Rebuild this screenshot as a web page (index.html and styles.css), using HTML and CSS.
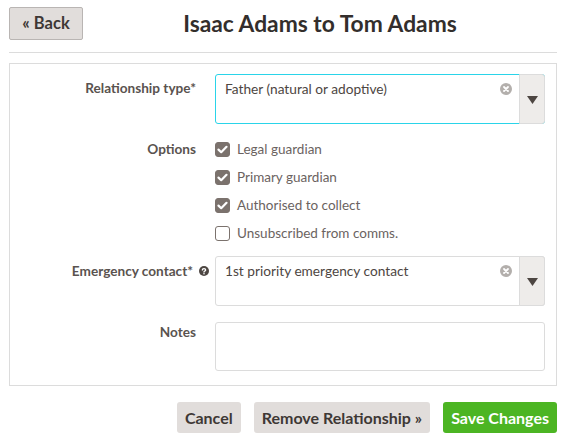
FILE: index.html
```html
<!DOCTYPE html>
<html>
<head>
<meta charset="utf-8">
<link rel="stylesheet" href="styles.css">
</head>
<body>
<div class="page">
  <header class="header">
    <button class="btn btn-back">« Back</button>
    <h1 class="title">Isaac Adams to Tom Adams</h1>
  </header>

  <form class="panel">
    <div class="row row-rel">
      <label class="label label-rel">Relationship type*</label>
      <div class="select select-focus">
        <div class="select-value">Father (natural or adoptive)</div>
        <span class="clear"><svg width="12" height="12" viewBox="0 0 12 12"><circle cx="6" cy="6" r="6" fill="#b3afac"/><path d="M4 4 L8 8 M8 4 L4 8" stroke="#fff" stroke-width="1.8" stroke-linecap="round"/></svg></span>
        <div class="select-arrow"><svg width="11" height="8" viewBox="0 0 11 8"><path d="M0 0 H11 L5.5 8 Z" fill="#4d4642"/></svg></div>
      </div>
    </div>

    <div class="row row-opts">
      <label class="label label-opts">Options</label>
      <div class="checks">
        <div class="check"><span class="box on"><svg width="11" height="9" viewBox="0 0 11 9"><path d="M1.5 4.6 L4.2 7.2 L9.5 1.8" fill="none" stroke="#fff" stroke-width="2.2" stroke-linecap="round" stroke-linejoin="round"/></svg></span><span>Legal guardian</span></div>
        <div class="check"><span class="box on"><svg width="11" height="9" viewBox="0 0 11 9"><path d="M1.5 4.6 L4.2 7.2 L9.5 1.8" fill="none" stroke="#fff" stroke-width="2.2" stroke-linecap="round" stroke-linejoin="round"/></svg></span><span>Primary guardian</span></div>
        <div class="check"><span class="box on"><svg width="11" height="9" viewBox="0 0 11 9"><path d="M1.5 4.6 L4.2 7.2 L9.5 1.8" fill="none" stroke="#fff" stroke-width="2.2" stroke-linecap="round" stroke-linejoin="round"/></svg></span><span>Authorised to collect</span></div>
        <div class="check"><span class="box"></span><span>Unsubscribed from comms.</span></div>
      </div>
    </div>

    <div class="row row-em">
      <label class="label label-em">Emergency contact*<span class="help"><svg width="10" height="10" viewBox="0 0 10 10"><circle cx="5" cy="5" r="5" fill="#4d4642"/><path d="M3.4 3.9 C3.4 2.2 6.6 2.2 6.6 3.9 C6.6 5 5 5 5 6.1" fill="none" stroke="#fff" stroke-width="1.4" stroke-linecap="round"/><circle cx="5" cy="7.8" r="0.8" fill="#fff"/></svg></span></label>
      <div class="select">
        <div class="select-value">1st priority emergency contact</div>
        <span class="clear"><svg width="12" height="12" viewBox="0 0 12 12"><circle cx="6" cy="6" r="6" fill="#b3afac"/><path d="M4 4 L8 8 M8 4 L4 8" stroke="#fff" stroke-width="1.8" stroke-linecap="round"/></svg></span>
        <div class="select-arrow"><svg width="11" height="8" viewBox="0 0 11 8"><path d="M0 0 H11 L5.5 8 Z" fill="#4d4642"/></svg></div>
      </div>
    </div>

    <div class="row row-notes">
      <label class="label label-notes">Notes</label>
      <textarea class="notes"></textarea>
    </div>
  </form>

  <div class="actions">
    <button class="btn btn-grey">Cancel</button>
    <button class="btn btn-grey">Remove Relationship »</button>
    <button class="btn btn-green">Save Changes</button>
  </div>
</div>
</body>
</html>
```

FILE: styles.css
```css
* { box-sizing: border-box; }
html, body { margin: 0; padding: 0; background: #fff; }
body {
  font-family: Lato, "Open Sans", sans-serif;
  color: #4d4642;
}
.page {
  padding: 7px 9px 0 9px;
  width: 566px;
}
.header {
  display: flex;
  align-items: center;
  height: 46px;
  padding-bottom: 13px;
  border-bottom: 1px solid #dcdcdc;
}
.btn {
  font-family: inherit;
  font-weight: 700;
  font-size: 16px;
  border: none;
  border-radius: 3px;
  cursor: pointer;
  padding: 0;
}
.btn-back {
  width: 74px;
  height: 33px;
  background: #e1dddb;
  border: 1px solid #b9b5b3;
  border-radius: 2px;
  color: #3e3835;
  font-size: 16.5px;
}
.title {
  flex: 1;
  margin: 0;
  text-align: center;
  font-size: 22.8px;
  font-weight: 700;
  color: #332e2c;
}
.panel {
  margin-top: 10px;
  border: 1px solid #dcdcdc;
  padding: 10px 10px 14px 0;
  width: 548px;
}
.row {
  display: grid;
  grid-template-columns: 186px 330px;
  column-gap: 19px;
}
.label {
  text-align: right;
  font-weight: 700;
  font-size: 13.6px;
  color: #5a534f;
  line-height: 16px;
  position: relative;
}
.label-rel { padding-top: 6px; }
.label-opts { padding-top: 6px; }
.label-em { padding-top: 7px; padding-right: 3px; }
.label-notes { padding-top: 2px; }
.help {
  position: absolute;
  right: -13px;
  top: 10px;
  display: flex;
}
.select {
  position: relative;
  display: flex;
  height: 50px;
  border: 1px solid #dcdcdc;
  border-radius: 3px;
}
.select-focus {
  border-color: #2ad4e9;
}
.select-value {
  flex: 1;
  padding: 6px 0 0 9px;
  font-size: 13.7px;
  line-height: 16px;
  color: #4d4642;
}
.clear {
  display: flex;
  margin: 8px 7px 0 0;
  height: 12px;
}
.select-arrow {
  width: 26px;
  margin: -1px -1px -1px 0;
  background: #eeecea;
  border: 1px solid #dcdcdc;
  border-radius: 0 3px 3px 0;
  display: flex;
  align-items: center;
  justify-content: center;
  padding-top: 1px;
}
.row-opts { margin-top: 11px; }
.checks {
  display: flex;
  flex-direction: column;
}
.check {
  display: flex;
  align-items: center;
  height: 28px;
  font-size: 13.5px;
  color: #6b635f;
}
.box {
  width: 15px;
  height: 15px;
  border-radius: 3px;
  border: 1px solid #7b726d;
  margin-right: 7px;
  display: flex;
  align-items: center;
  justify-content: center;
  background: #fff;
}
.box.on { background: #7b726d; }
.row-em { margin-top: 9px; }
.row-notes { margin-top: 16px; }
.notes {
  height: 49px;
  border: 1px solid #dcdcdc;
  border-radius: 3px;
  resize: none;
  font-family: inherit;
}
.actions {
  display: flex;
  justify-content: flex-end;
  gap: 13px;
  margin-top: 16px;
}
.btn-grey {
  background: #e1dddb;
  color: #3e3835;
  height: 31px;
  padding: 0 8px;
}
.btn-green {
  background: #4cb523;
  color: #fff;
  height: 31px;
  padding: 0 8px;
}
```
